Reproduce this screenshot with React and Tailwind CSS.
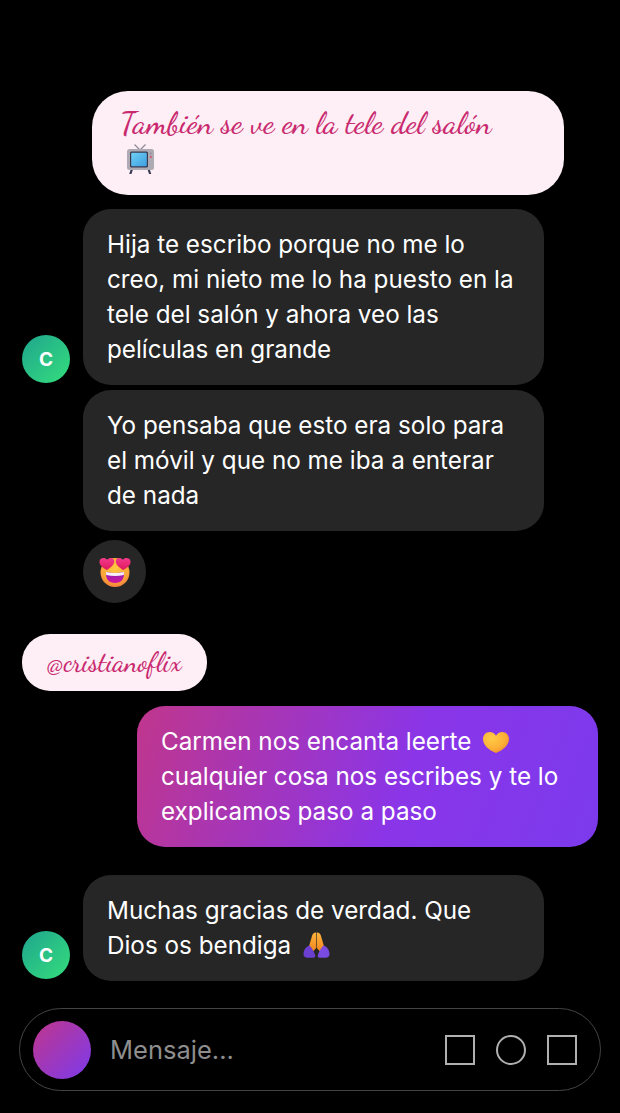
import React from "react";

const TvEmoji = () => (
  <svg width="27" height="30" viewBox="0 0 27 30" className="block">
    <defs>
      <linearGradient id="tvScreen" x1="0" y1="0" x2="1" y2="1">
        <stop offset="0" stopColor="#6fd0f5" />
        <stop offset="1" stopColor="#3d9fe0" />
      </linearGradient>
    </defs>
    <path d="M13 6 L7.5 0.5 M13 6 L18.5 0.5" stroke="#8d8a96" strokeWidth="1.2" fill="none" />
    <path d="M5 25 L3.5 29.5 M21.5 25 L23 29.5" stroke="#3b3a52" strokeWidth="2.2" strokeLinecap="round" />
    <rect x="0" y="5" width="27" height="21" rx="2.5" fill="#aeaab4" />
    <rect x="3" y="7.5" width="18" height="16" rx="1.5" fill="#3a3950" />
    <rect x="4.2" y="8.7" width="15.6" height="13.6" rx="1" fill="url(#tvScreen)" />
    <circle cx="23.8" cy="9.5" r="1" fill="#94909c" />
    <circle cx="23.8" cy="13" r="1.1" fill="#d9506a" />
  </svg>
);

const HeartEyesEmoji = () => (
  <svg width="32" height="30" viewBox="0 0 32 30" className="block">
    <defs>
      <radialGradient id="faceFill" cx="0.5" cy="0.35" r="0.75">
        <stop offset="0" stopColor="#ffc940" />
        <stop offset="0.6" stopColor="#fba93a" />
        <stop offset="1" stopColor="#ef6f3a" />
      </radialGradient>
      <linearGradient id="mouthFill" x1="0.5" y1="0" x2="0.5" y2="1">
        <stop offset="0" stopColor="#8a1fb5" />
        <stop offset="1" stopColor="#d4159c" />
      </linearGradient>
      <linearGradient id="eyeFill" x1="0.5" y1="0" x2="0.5" y2="1">
        <stop offset="0" stopColor="#f23a8a" />
        <stop offset="1" stopColor="#e0185f" />
      </linearGradient>
    </defs>
    <circle cx="16" cy="15.5" r="14.5" fill="url(#faceFill)" />
    <path d="M7 15 Q16 17 25 15 Q25.5 26 16 26 Q6.5 26 7 15 Z" fill="url(#mouthFill)" />
    <path d="M7 15 Q16 17 25 15 L24.8 18 Q16 20 7.2 18 Z" fill="#f6eefa" />
    <path d="M8 13 C3 10.5 0 7.5 0.5 4.2 C1 0.8 5.8 -0.2 8.2 2.8 C10.5 -0.2 15 0.8 15.2 4.2 C15.4 7.5 12 10.5 8 13 Z" fill="url(#eyeFill)" />
    <path d="M24 13 C20 10.5 16.6 7.5 16.8 4.2 C17 0.8 21.5 -0.2 23.8 2.8 C26.2 -0.2 31 0.8 31.5 4.2 C32 7.5 29 10.5 24 13 Z" fill="url(#eyeFill)" />
  </svg>
);

const YellowHeart = () => (
  <svg width="26" height="21" viewBox="0 0 26 21" className="inline-block align-[-3px]">
    <defs>
      <radialGradient id="heartFill" cx="0.35" cy="0.3" r="0.85">
        <stop offset="0" stopColor="#ffcb45" />
        <stop offset="0.6" stopColor="#fbae36" />
        <stop offset="1" stopColor="#ee7f30" />
      </radialGradient>
    </defs>
    <path d="M13 21 C5.5 18 0 13 0 7 C0 2.8 3 0 6.8 0 C9.4 0 11.8 1.4 13 3.8 C14.2 1.4 16.6 0 19.2 0 C23 0 26 2.8 26 7 C26 13 20.5 18 13 21 Z" fill="url(#heartFill)" />
  </svg>
);

const PrayEmoji = () => (
  <svg width="27" height="26" viewBox="0 0 27 26" className="inline-block align-[-4px]">
    <defs>
      <linearGradient id="handFill" x1="0.5" y1="0" x2="0.5" y2="1">
        <stop offset="0" stopColor="#fbb33a" />
        <stop offset="1" stopColor="#f2851f" />
      </linearGradient>
    </defs>
    <path d="M13.2 0.5 C11 0.3 9.6 1.5 9 4 L5.5 16 L9.5 20 L13.2 16 Z" fill="url(#handFill)" />
    <path d="M13.8 0.5 C16 0.3 17.4 1.5 18 4 L21.5 16 L17.5 20 L13.8 16 Z" fill="url(#handFill)" />
    <path d="M6.5 13.5 C3 14.5 0.5 18 0.5 22 C0.5 24.5 2 25.8 4.5 25.8 H10 C12 25.8 12.8 24.5 12 22.5 C10.8 19.5 9 16 6.5 13.5 Z" fill="#6b3fd0" />
    <path d="M20.5 13.5 C24 14.5 26.5 18 26.5 22 C26.5 24.5 25 25.8 22.5 25.8 H17 C15 25.8 14.2 24.5 15 22.5 C16.2 19.5 18 16 20.5 13.5 Z" fill="#7a4be0" />
  </svg>
);

const Avatar = () => (
  <div className="w-12 h-12 shrink-0 mb-0.5 rounded-full bg-[linear-gradient(135deg,#1fa58e,#34de7c)] flex items-center justify-center text-white text-[19px] font-bold">
    C
  </div>
);

const DarkBubble = ({ children }) => (
  <div className="w-[461px] rounded-[28px] bg-[#262626] px-6 py-[18px] text-white">{children}</div>
);

const scriptFont = "font-['Dancing_Script','Liberation_Serif',cursive] font-medium text-[#c9296f]";

const App = () => {
  return (
    <div className="w-[620px] h-[1113px] overflow-hidden bg-black font-['Inter',sans-serif] text-[24.25px] leading-[35px] pt-[91px]">
      <div className={`ml-[92px] w-[472px] h-[104px] rounded-[36px] bg-[#fdeff5] pl-[28px] pr-7 pt-[15px] ${scriptFont} text-[31.5px] leading-[34px]`}>
        También se ve en la tele del salón
        <div className="ml-[7px] mt-[4px]">
          <TvEmoji />
        </div>
      </div>

      <div className="mt-[14px] pl-[22px] flex items-end gap-[13px]">
        <Avatar />
        <DarkBubble>
          Hija te escribo porque no me lo creo, mi nieto me lo ha puesto en la tele del salón y ahora veo las películas en grande
        </DarkBubble>
      </div>

      <div className="mt-[5px] ml-[83px]">
        <DarkBubble>Yo pensaba que esto era solo para el móvil y que no me iba a enterar de nada</DarkBubble>
      </div>

      <div className="mt-[9px] ml-[83px] w-[63px] h-[63px] rounded-full bg-[#262626] flex items-center justify-center">
        <HeartEyesEmoji />
      </div>

      <div className={`mt-[31px] ml-[22px] w-[185px] h-[57px] rounded-[28px] bg-[#fdeff5] flex items-center justify-center ${scriptFont} text-[27.5px]`}>
        @cristianoflix
      </div>

      <div className="mt-[15px] ml-[137px] w-[461px] rounded-[28px] bg-[linear-gradient(110deg,#c0368c,#8a35e8_58%,#7c3aed)] px-6 py-[18px] text-white">
        Carmen nos encanta leerte <span className="ml-[5px]"><YellowHeart /></span> cualquier cosa nos escribes y te lo explicamos paso a paso
      </div>

      <div className="mt-[28px] pl-[22px] flex items-end gap-[13px]">
        <Avatar />
        <DarkBubble>
          Muchas gracias de verdad. Que Dios os bendiga <span className="ml-[5px]"><PrayEmoji /></span>
        </DarkBubble>
      </div>

      <div className="mt-[27px] ml-[19px] w-[582px] h-[83px] rounded-[42px] border border-[#444444] flex items-center pl-[13px] pr-[23px]">
        <div className="w-[58px] h-[58px] shrink-0 rounded-full bg-[linear-gradient(135deg,#c0368c,#7c3aed)]" />
        <span className="ml-[19px] flex-1 text-[#8e8e8e] text-[25.5px]">Mensaje...</span>
        <div className="flex items-center gap-[21px]">
          <div className="w-[30px] h-[30px] border-2 border-[#b0b0b0]" />
          <div className="w-[30px] h-[30px] border-2 border-[#b0b0b0] rounded-full" />
          <div className="w-[30px] h-[30px] border-2 border-[#b0b0b0]" />
        </div>
      </div>
    </div>
  );
};

export default App;
